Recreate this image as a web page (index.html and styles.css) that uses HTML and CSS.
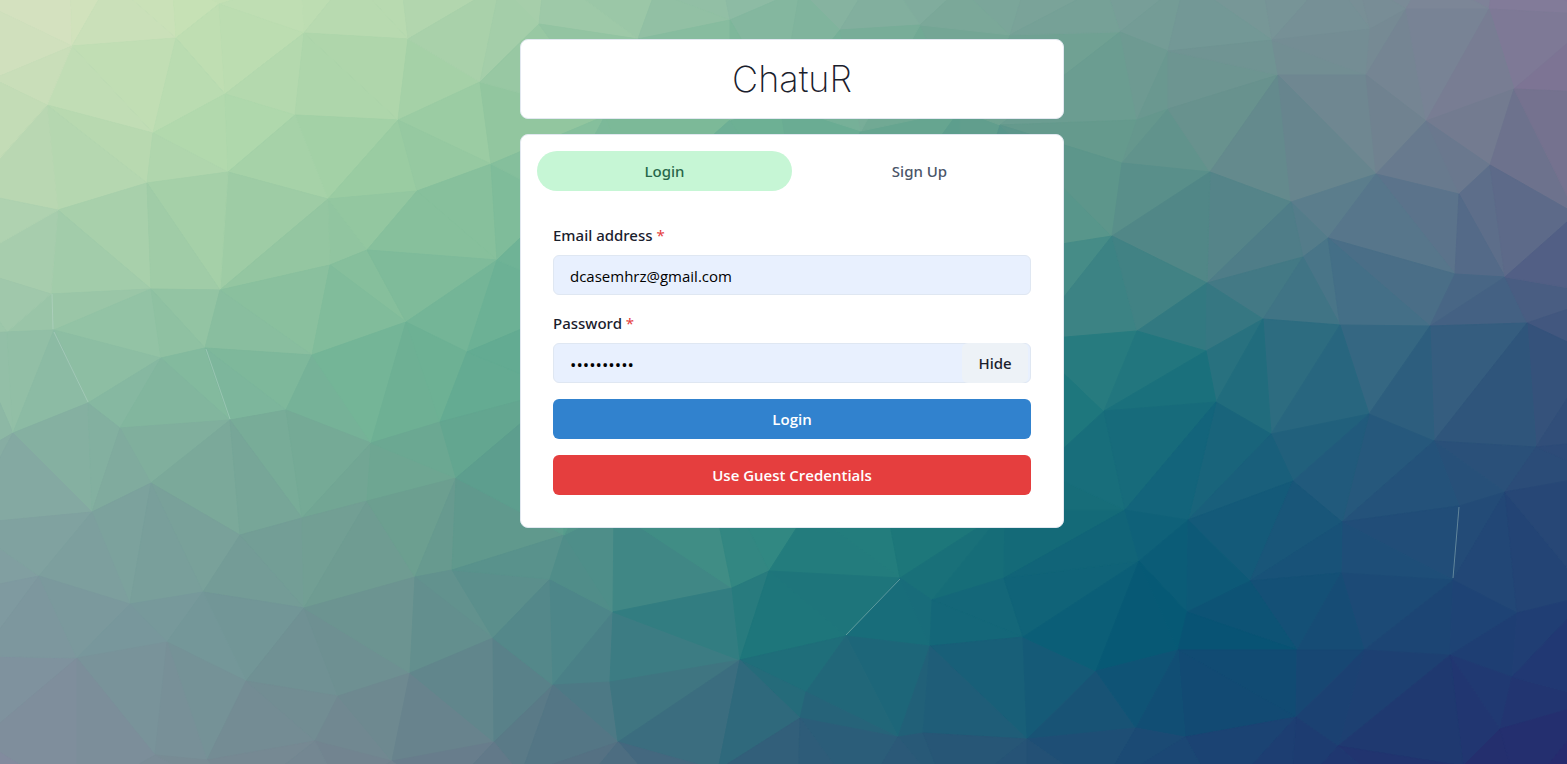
FILE: index.html
```html
<!DOCTYPE html>
<html lang="en">
<head>
<meta charset="utf-8">
<meta name="viewport" content="width=device-width, initial-scale=1">
<title>ChatuR</title>
<link rel="stylesheet" href="styles.css">
</head>
<body>
<svg class="backdrop" id="backdrop" viewBox="0 0 1567 764" preserveAspectRatio="xMinYMin slice" aria-hidden="true"></svg>
<main class="page">
  <header class="card brand"><h1 class="brand-name">ChatuR</h1></header>
  <section class="card auth">
    <div class="tabs" role="tablist">
      <button class="tab tab-active" type="button" role="tab" aria-selected="true">Login</button>
      <button class="tab" type="button" role="tab" aria-selected="false">Sign Up</button>
    </div>
    <form class="form">
      <div class="field">
        <label class="label" for="email">Email address <span class="required">*</span></label>
        <input class="input" id="email" type="email" value="dcasemhrz@gmail.com">
      </div>
      <div class="field">
        <label class="label" for="password">Password <span class="required">*</span></label>
        <div class="input-group">
          <input class="input input-secret" id="password" type="password" value="chatchat12">
          <button class="toggle" type="button">Hide</button>
        </div>
      </div>
      <button class="button button-blue" type="submit">Login</button>
      <button class="button button-red" type="button">Use Guest Credentials</button>
    </form>
  </section>
</main>
<script src="backdrop.js"></script>
</body>
</html>
```

FILE: styles.css
```css
* { box-sizing: border-box; }

body {
  margin: 0;
  padding-left: 17px;
  min-height: 100vh;
  background: #5c9c8e;
  color: #1a202c;
  font-family: "Open Sans", "Noto Sans", sans-serif;
  font-size: 15px;
  line-height: 24px;
}

button, input { font: inherit; color: inherit; }
button { border: 0; padding: 0; cursor: pointer; }

.backdrop {
  position: fixed;
  inset: 0;
  z-index: -1;
  width: 100%;
  height: 100%;
}
.glint { stroke: #c4dcd2; stroke-opacity: 0.4; stroke-width: 1; }

.page {
  display: flex;
  flex-direction: column;
  gap: 15px;
  max-width: 576px;
  margin: 0 auto;
  padding: 39px 16px;
}

.card {
  background: #fff;
  border: 1px solid #e2e8f0;
  border-radius: 8px;
}
.brand { padding: 12px; text-align: center; }
.brand-name {
  margin: 0;
  font-family: Inter, sans-serif;
  font-size: 36px;
  line-height: 54px;
  font-weight: 200;
}

.auth { padding: 16px; }
.tabs { display: flex; margin-bottom: 16px; }
.tab, .label, .toggle {
  font-family: "Noto Sans", sans-serif;
  font-weight: 500;
}
.tab {
  flex: 1;
  height: 40px;
  border-radius: 20px;
  background: transparent;
  color: #4a5568;
}
.tab-active { background: #c6f6d5; color: #276749; }

.form {
  display: flex;
  flex-direction: column;
  gap: 16px;
  padding: 16px;
}
.field { display: flex; flex-direction: column; gap: 8px; }
.required { color: #e53e3e; font-weight: 400; }
.input {
  width: 100%;
  height: 40px;
  padding: 2px 16px 0;
  border: 1px solid #dfe7f2;
  border-radius: 6px;
  background: #e8f0fe;
  color: #000;
}
.input-secret { font-size: 17px; }
.input-group { position: relative; }
.toggle {
  position: absolute;
  top: 0;
  right: 3px;
  width: 66px;
  height: 40px;
  border-radius: 6px;
  background: #edf2f7;
}
.button {
  height: 40px;
  border-radius: 6px;
  color: #fff;
  font-weight: 600;
}
.button-blue { background: #3182ce; }
.button-red { background: #e53e3e; }
```

FILE: backdrop.js
```js
// Low-poly backdrop: a Delaunay mesh whose facets are shaded from a colour grid.
const points = [
  [-90,-60],[-20,2],[70,-30],[110,-20],[172,-25],[219,4],[350,-24],[301,-20],[400,-30],[500,-15],[545,-30],[655,-8],[720,-30],[800,-10],[880,-35],[960,-12],[1030,-30],[1105,-15],[1185,-20],[1262,-20],[1330,-25],[1358,-20],[1425,-25],[1495,-30],[1600,15],
  [72,46],[176,38],[304,33],[47,105],[153,133],[225,94],[295,115],[398,120],[147,183],[228,172],[328,199],
  [58,210],[367,250],[330,265],[151,289],[220,290],[51,294],[7,332],[54,330],[205,348],[161,358],[312,355],
  [-7,79],[-30,192],[-40,266],[-30,334],[-25,455],[-35,524],[-30,590],[-20,656],[-20,740],
  [88,403],[13,433],[120,428],[230,420],[286,410],[371,443],[151,483],[92,512],[302,518],[240,535],[367,501],
  [39,576],[130,604],[203,592],[304,608],[77,658],[167,642],[246,681],[338,696],[155,755],[207,760],[315,741],[392,761],
  [408,39],[480,82],[491,164],[417,191],[406,322],[497,260],[467,352],[440,422],[539,24],[456,478],[415,577],[452,570],
  [410,673],[493,638],[494,742],[550,579],[613,612],[553,685],[610,682],[618,742],[521,775],[564,535],[614,510],
  [638,39],[605,116],[560,200],[590,300],[560,390],[610,440],[640,200],[690,310],[700,430],[730,120],[780,105],[861,131],[800,230],[770,340],[800,450],[870,330],[880,220],[960,110],[1000,125],[960,260],[960,380],[880,470],[1030,340],[1040,470],
  [730,20],[840,30],[920,25],[1010,35],[808,510],[732,588],[769,571],[740,660],[900,578],[846,636],[932,600],[1004,578],[1005,510],[930,646],[1023,637],
  [800,718],[806,692],[898,737],[923,733],[1027,739],[718,770],[1096,671],
  [1120,32],[1168,51],[1137,120],[1168,109],[1122,163],[1210,172],[1278,75],[1272,40],[1366,75],[1370,29],[1406,9],[1489,9],[1514,89],
  [1426,121],[1376,174],[1291,202],[1490,165],[1459,194],[1328,238],[1303,257],[1112,236],[1207,283],[1455,274],[1505,277],
  [1137,331],[1206,351],[1263,319],[1340,325],[1430,326],[1527,323],[1576,214],[1610,93],[1610,295],[1595,355],
  [1216,402],[1104,411],[1271,434],[1369,414],[1434,441],[1536,447],[1293,481],[1505,492],[1125,510],[1188,520],[1342,522],[1139,561],
  [1459,506],[1453,580],[1250,581],[1341,573],[1187,612],[1297,650],[1364,650],[1178,650],[1450,655],[1517,613],[1512,677],[1500,729],
  [1296,717],[1136,728],[1185,737],[1338,746],[1463,766],[1610,440],[1600,475],[1590,595],[1600,700],
  [-30,800],[77,800],[240,800],[340,790],[440,800],[570,800],[660,790],[798,800],[860,800],[950,800],[1027,800],[1100,790],[1220,800],[1290,800],[1400,800],[1520,800],[1640,800],[1660,-60]
];

const shades = [
  ["d9e2c2","c6e1b5","b8dab0","9ec9a8","8ab8a3","7ca79a","769c98","788e96","84769a"],
  ["c3dcb6","b4daae","a2d1a5","89c09c","70b295","68a28e","65958d","6f8390","76738f"],
  ["a8ceae","9fcca6","88c09c","68b094","5aa090","50948a","4c8486","50748a","546086"],
  ["90bda6","82b99e","70b395","58a48f","389088","25807f","1a717c","2d6480","34507a"],
  ["83a6a2","7aa49a","6fa291","53948a","2b8680","197378","10607a","20527a","284876"],
  ["7e969f","74979a","6b9190","4a8488","1c747a","136479","035674","1a4874","203b74"],
  ["838b9e","788c95","70828f","526f82","305e7a","275576","1b4674","20356f","262b6e"]
].map(row => row.map(h => [0, 2, 4].map(i => parseInt(h.slice(i, i + 2), 16))));

function shadeAt(x, y) {
  const u = Math.min(7.999, Math.max(0, x / 1567 * 8));
  const v = Math.min(5.999, Math.max(0, y / 764 * 6));
  const i = Math.floor(u), j = Math.floor(v), a = u - i, b = v - j;
  return [0, 1, 2].map(c => Math.round(
    (shades[j][i][c] * (1 - a) + shades[j][i + 1][c] * a) * (1 - b) +
    (shades[j + 1][i][c] * (1 - a) + shades[j + 1][i + 1][c] * a) * b));
}

function circle(pts, t) {
  const [[ax, ay], [bx, by], [cx, cy]] = t.map(i => pts[i]);
  const d = 2 * (ax * (by - cy) + bx * (cy - ay) + cx * (ay - by));
  const A = ax * ax + ay * ay, B = bx * bx + by * by, C = cx * cx + cy * cy;
  const x = (A * (by - cy) + B * (cy - ay) + C * (ay - by)) / d;
  const y = (A * (cx - bx) + B * (ax - cx) + C * (bx - ax)) / d;
  return { t, x, y, r: (ax - x) ** 2 + (ay - y) ** 2 };
}

function triangulate(source) {
  const n = source.length;
  const pts = source.concat([[-20000, -20000], [22000, -20000], [700, 30000]]);
  let list = [circle(pts, [n, n + 1, n + 2])];
  for (let p = 0; p < n; p++) {
    const edges = new Map(), keep = [];
    for (const c of list) {
      if ((pts[p][0] - c.x) ** 2 + (pts[p][1] - c.y) ** 2 < c.r) {
        for (const [a, b] of [[0, 1], [1, 2], [2, 0]]) {
          const e = [c.t[a], c.t[b]].sort((m, k) => m - k), key = e.join();
          if (edges.has(key)) edges.delete(key); else edges.set(key, e);
        }
      } else keep.push(c);
    }
    list = keep;
    for (const e of edges.values()) list.push(circle(pts, [e[0], e[1], p]));
  }
  return list.map(c => c.t).filter(t => t.every(i => i < n));
}

const svg = document.getElementById("backdrop");
function add(name, attributes) {
  const node = document.createElementNS("http://www.w3.org/2000/svg", name);
  for (const key in attributes) node.setAttribute(key, attributes[key]);
  svg.appendChild(node);
}

for (const t of triangulate(points)) {
  const corners = t.map(i => points[i]);
  const x = (corners[0][0] + corners[1][0] + corners[2][0]) / 3;
  const y = (corners[0][1] + corners[1][1] + corners[2][1]) / 3;
  const fill = "rgb(" + shadeAt(x, y).join() + ")";
  add("polygon", { points: corners.join(" "), fill, stroke: fill, "stroke-width": 1 });
}

for (const [x1, y1, x2, y2] of [[52,294,53,329],[54,332,88,402],[206,349,230,419],[900,579,846,635],[1459,507,1453,578]]) {
  add("line", { class: "glint", x1, y1, x2, y2 });
}
```
